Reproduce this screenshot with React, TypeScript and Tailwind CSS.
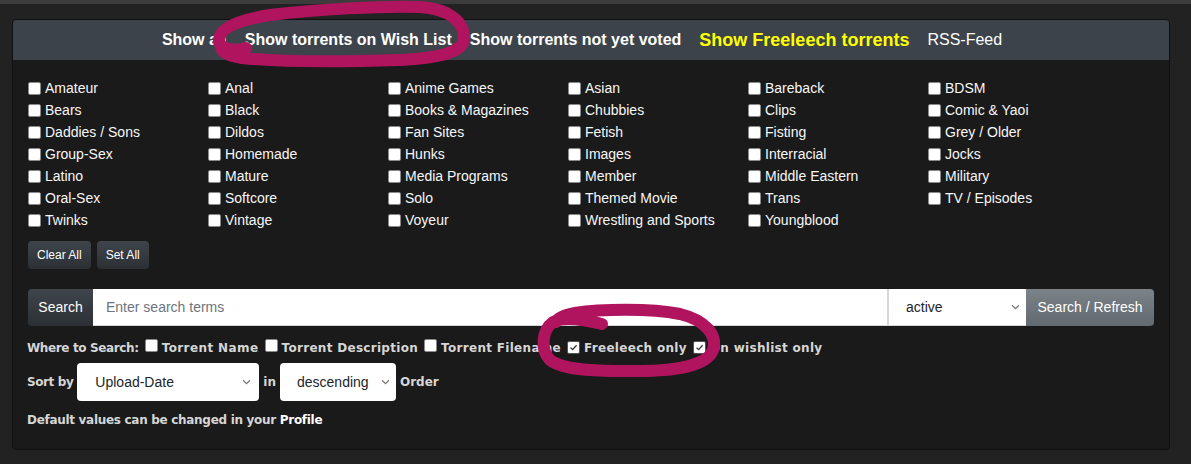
import React from "react";

const cats = [
  "Amateur", "Anal", "Anime Games", "Asian", "Bareback", "BDSM",
  "Bears", "Black", "Books & Magazines", "Chubbies", "Clips", "Comic & Yaoi",
  "Daddies / Sons", "Dildos", "Fan Sites", "Fetish", "Fisting", "Grey / Older",
  "Group-Sex", "Homemade", "Hunks", "Images", "Interracial", "Jocks",
  "Latino", "Mature", "Media Programs", "Member", "Middle Eastern", "Military",
  "Oral-Sex", "Softcore", "Solo", "Themed Movie", "Trans", "TV / Episodes",
  "Twinks", "Vintage", "Voyeur", "Wrestling and Sports", "Youngblood",
];

function Box({ checked }: { checked?: boolean }) {
  if (checked) {
    return (
      <span className="inline-flex items-center justify-center w-[13px] h-[13px] shrink-0 bg-white border border-[#555] rounded-[2px]">
        <svg width="9" height="9" viewBox="0 0 9 9">
          <path d="M1.5 4.6 L3.6 6.6 L7.6 2.2" fill="none" stroke="#333" strokeWidth="1.3" />
        </svg>
      </span>
    );
  }
  return <span className="inline-block w-[13px] h-[13px] shrink-0 bg-white border border-[#8a8a8a] rounded-[2px]" />;
}

function Chevron() {
  return (
    <svg width="9" height="6" viewBox="0 0 9 6" className="shrink-0">
      <path d="M1 1.2 L4.5 4.6 L8 1.2" fill="none" stroke="#777" strokeWidth="1.2" />
    </svg>
  );
}

export default function App() {
  return (
    <div className="relative w-[1191px] h-[464px] overflow-hidden bg-[#222222] font-['Liberation_Sans',Arial,sans-serif]">
      <div className="h-[4px] bg-[#3c3c3c]" />
      <div className="ml-[12px] mt-[15px] w-[1158px] h-[431px] rounded-[4px] border border-[#101010] bg-[#1a1a1a] overflow-hidden">
        <div className="h-[40px] bg-[#3d434a] flex items-center justify-center gap-[18px] pr-[18px] text-[16px] font-bold text-white">
          <span>Show all</span>
          <span>Show torrents on Wish List</span>
          <span>Show torrents not yet voted</span>
          <span className="text-[#ffff00] text-[18px]">Show Freeleech torrents</span>
          <span className="font-normal">RSS-Feed</span>
        </div>

        <div className="pl-[15px] pt-[17px]">
          <div className="grid grid-cols-[repeat(6,180px)] text-[14px] text-[#f7f7f7]">
            {cats.map((c) => (
              <div key={c} className="flex items-center gap-[4px] h-[22px]">
                <Box />
                <span>{c}</span>
              </div>
            ))}
          </div>

          <div className="mt-[10px] flex gap-[6px] text-[12px] text-white">
            <div className="h-[28px] px-[9px] flex items-center rounded-[4px] bg-gradient-to-b from-[#3f454b] to-[#2c3035]">Clear All</div>
            <div className="h-[28px] px-[9px] flex items-center rounded-[4px] bg-gradient-to-b from-[#3f454b] to-[#2c3035]">Set All</div>
          </div>

          <div className="mt-[20px] flex h-[37px] w-[1126px] text-[14px]">
            <div className="w-[65px] flex items-center justify-center rounded-l-[4px] bg-gradient-to-b from-[#3f454b] to-[#2c3035] text-white">Search</div>
            <div className="flex-1 bg-white flex items-center pl-[13px] text-[#6c757d] border-b border-[#d6d6d6]">Enter search terms</div>
            <div className="w-[139px] bg-white flex items-center justify-between pl-[17px] pr-[6px] text-[#212529] border-l-[2px] border-b border-[#d6d6d6]">
              <span>active</span>
              <Chevron />
            </div>
            <div className="w-[128px] flex items-center justify-center rounded-r-[4px] bg-gradient-to-b from-[#7b8389] to-[#62696f] text-white">Search / Refresh</div>
          </div>

          <div className="mt-[12px] h-[20px] flex items-center text-[12px] font-bold text-[#d6d6d6] font-['DejaVu_Sans',Verdana,sans-serif]">
            <span className="-ml-[1px] tracking-[-0.37px]">Where to Search:</span>
            <span className="ml-[6px]"><Box /></span>
            <span className="ml-[4px] tracking-[0.4px]">Torrent Name</span>
            <span className="ml-[6px]"><Box /></span>
            <span className="ml-[4px] tracking-[0.3px]">Torrent Description</span>
            <span className="ml-[6px]"><Box /></span>
            <span className="ml-[4px] tracking-[0.3px]">Torrent Filename</span>
            <span className="ml-[6px]"><Box checked /></span>
            <span className="ml-[4px] tracking-[0.3px]">Freeleech only</span>
            <span className="ml-[6px]"><Box checked /></span>
            <span className="ml-[4px] tracking-[0.3px]">On wishlist only</span>
          </div>

          <div className="mt-[5px] h-[38px] flex items-center text-[12px] font-bold text-[#d6d6d6] font-['DejaVu_Sans',Verdana,sans-serif]">
            <span className="-ml-[1px] tracking-[-0.4px]">Sort by</span>
            <div className="ml-[4px] w-[182px] h-[38px] rounded-[4px] bg-white flex items-center justify-between pl-[18px] pr-[8px] font-normal text-[14px] text-[#212529] font-['Liberation_Sans',Arial,sans-serif] tracking-normal">
              <span>Upload-Date</span>
              <Chevron />
            </div>
            <span className="ml-[4px]">in</span>
            <div className="ml-[4px] w-[116px] h-[38px] rounded-[4px] bg-white flex items-center justify-between pl-[17px] pr-[6px] font-normal text-[14px] text-[#212529] font-['Liberation_Sans',Arial,sans-serif]">
              <span>descending</span>
              <Chevron />
            </div>
            <span className="ml-[4px]">Order</span>
          </div>

          <div className="mt-[9px] h-[20px] flex items-center text-[12px] font-bold text-[#d6d6d6] font-['DejaVu_Sans',Verdana,sans-serif] tracking-[-0.3px]">
            <span className="-ml-[1px]">Default values can be changed in your&nbsp;</span>
            <span className="text-white">Profile</span>
          </div>
        </div>
      </div>

      <svg className="absolute inset-0 pointer-events-none" width="1191" height="464" viewBox="0 0 1191 464">
        <path
          d="M246 48 C232 52, 219 48, 219 40 C219 28, 238 20, 270 15 C320 9, 380 6, 420 7 C450 9, 464 22, 464 38 C464 52, 440 58, 400 60 C340 62, 280 62, 242 58 C228 56, 221 52, 221 46"
          fill="none" stroke="#b1145e" strokeWidth="12" strokeLinecap="round" strokeLinejoin="round"
        />
        <path
          d="M602 324 C585 320, 565 316, 553 322 C542 330, 540 350, 550 360 C565 372, 610 371, 640 371 C680 371, 708 364, 713 350 C718 335, 705 320, 680 314 C650 308, 600 309, 575 313 C563 315, 558 318, 556 322"
          fill="none" stroke="#b1145e" strokeWidth="12" strokeLinecap="round" strokeLinejoin="round"
        />
      </svg>
    </div>
  );
}
